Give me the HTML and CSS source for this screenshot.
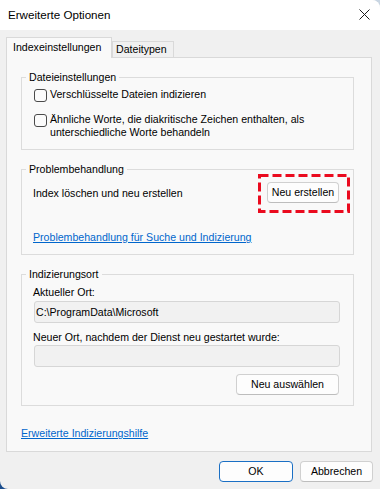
FILE: index.html
```html
<!DOCTYPE html>
<html lang="de">
<head>
<meta charset="utf-8">
<title>Erweiterte Optionen</title>
<link rel="stylesheet" href="styles.css">
</head>
<body>
<div class="window">
  <div class="titlebar">
    <span class="title">Erweiterte Optionen</span>
    <svg class="close" width="11" height="11" viewBox="0 0 11 11"><path d="M0.5 0.5 L10.5 10.5 M10.5 0.5 L0.5 10.5" stroke="#1a1a1a" stroke-width="1" fill="none"/></svg>
  </div>
  <div class="client">
    <div class="tabs">
      <div class="tab active">Indexeinstellungen</div>
      <div class="tab">Dateitypen</div>
    </div>
    <div class="panel">
      <fieldset class="group g1">
        <legend>Dateieinstellungen</legend>
        <label class="check c1"><span class="box"></span><span class="ctext">Verschlüsselte Dateien indizieren</span></label>
        <label class="check c2"><span class="box"></span><span class="ctext">Ähnliche Worte, die diakritische Zeichen enthalten, als<br>unterschiedliche Worte behandeln</span></label>
      </fieldset>
      <fieldset class="group g2">
        <legend>Problembehandlung</legend>
        <div class="row">
          <span>Index löschen und neu erstellen</span>
          <span class="mark">
            <button class="btn w72">Neu erstellen</button>
            <svg class="dash" width="92" height="39" viewBox="0 0 92 39"><rect x="1.5" y="1.5" width="89" height="36" fill="none" stroke="#ea0a1e" stroke-width="3" stroke-dasharray="9 4"/></svg>
          </span>
        </div>
        <div class="linkline"><a href="#">Problembehandlung für Suche und Indizierung</a></div>
      </fieldset>
      <fieldset class="group g3">
        <legend>Indizierungsort</legend>
        <div class="lbl">Aktueller Ort:</div>
        <div class="field">C:\ProgramData\Microsoft</div>
        <div class="lbl lbl2">Neuer Ort, nachdem der Dienst neu gestartet wurde:</div>
        <div class="field f2"></div>
        <div class="btnrow"><button class="btn w103">Neu auswählen</button></div>
      </fieldset>
      <div class="helplink"><a href="#">Erweiterte Indizierungshilfe</a></div>
    </div>
    <div class="footer">
      <button class="btn ok">OK</button>
      <button class="btn w73">Abbrechen</button>
    </div>
  </div>
</div>
</body>
</html>
```

FILE: styles.css
```css
* { box-sizing: border-box; }
html, body { margin: 0; padding: 0; }
body {
  width: 380px;
  height: 489px;
  overflow: hidden;
  background: linear-gradient(45deg, #1b4d8d 0%, #6f93bf 50%, #c9d6e3 100%);
  font-family: "Liberation Sans", Arial, sans-serif;
  font-size: 10.6px;
  color: #000;
}
.window {
  width: 380px;
  height: 489px;
  background: #f0f0f0;
  border-radius: 0 8px 0 8px;
  overflow: hidden;
  display: flex;
  flex-direction: column;
}
.titlebar {
  height: 30px;
  flex: none;
  background: #fff;
  display: flex;
  align-items: center;
  padding: 0 10px 1px 8px;
}
.title { flex: 1; font-size: 11.6px; }
.close { display: block; }
.client { flex: 1; padding: 7px 8px 0 6px; }
.tabs { display: flex; align-items: flex-end; height: 20px; }
.tab {
  height: 16px;
  width: 62px;
  border: 1px solid #d9d9d9;
  border-bottom: none;
  background: #f0f0f0;
  padding-left: 3px;
  line-height: 15px;
  white-space: nowrap;
}
.tab.active {
  height: 21px;
  width: 106px;
  margin-bottom: -1px;
  background: #f9f9f9;
  position: relative;
  z-index: 1;
  padding-left: 6px;
  line-height: 19px;
}
.panel {
  display: flow-root;
  border: 1px solid #d9d9d9;
  background: #f9f9f9;
  padding: 0 17px 10px 14px;
}
.group {
  border: 1px solid #dcdcdc;
  margin: 11px 0 0 0;
  padding: 0 0 10px 0;
  min-width: 0;
}
.group legend {
  margin-left: 4px;
  padding: 0 3px;
  line-height: 16px;
}
.check {
  display: flex;
  align-items: flex-start;
  margin-left: 12px;
  line-height: 13px;
}
.check.c1 { margin-top: 3px; }
.check.c2 { margin-top: 11px; }
.box {
  flex: none;
  width: 13px;
  height: 13px;
  margin: 1px 3px 0 0;
  border: 1px solid #4a4a4a;
  border-radius: 3px;
  background: #fbfbfb;
}
.g2 { padding-bottom: 9px; }
.row {
  display: flex;
  justify-content: space-between;
  align-items: center;
  height: 21px;
  margin-top: 5px;
  padding: 0 14px 0 11px;
}
.mark { position: relative; display: block; }
.dash {
  position: absolute;
  left: -9px;
  top: -8px;
  pointer-events: none;
}
.linkline { margin: 26px 0 0 11px; line-height: 16px; }
a { color: #0066cc; text-decoration: underline; }
.lbl { margin: 2px 0 0 11px; line-height: 16px; }
.lbl2 { margin-top: 6px; }
.field {
  margin: 1px 0 0 12px;
  width: 306px;
  height: 22px;
  border: 1px solid #d6d6d6;
  border-radius: 3px;
  background: #f1f1f1;
  padding-left: 1px;
  line-height: 20px;
}
.field.f2 { margin-top: 0; }
.btnrow {
  display: flex;
  justify-content: flex-end;
  padding-right: 14px;
  margin-top: 7px;
}
.helplink { margin-top: 19px; line-height: 16px; }
.btn {
  display: block;
  height: 21px;
  padding: 0;
  font: inherit;
  color: #000;
  line-height: 19px;
  background: #fdfdfd;
  border: 1px solid #d0d0d0;
  border-bottom-color: #bdbdbd;
  border-radius: 4px;
  text-align: center;
}
.w72 { width: 72px; }
.w73 { width: 73px; }
.w103 { width: 103px; }
.footer {
  display: flex;
  justify-content: flex-end;
  gap: 7px;
  margin: 9px -1px 0 0;
}
.btn.ok { width: 74px; border-color: #1a6fc4; }
```
